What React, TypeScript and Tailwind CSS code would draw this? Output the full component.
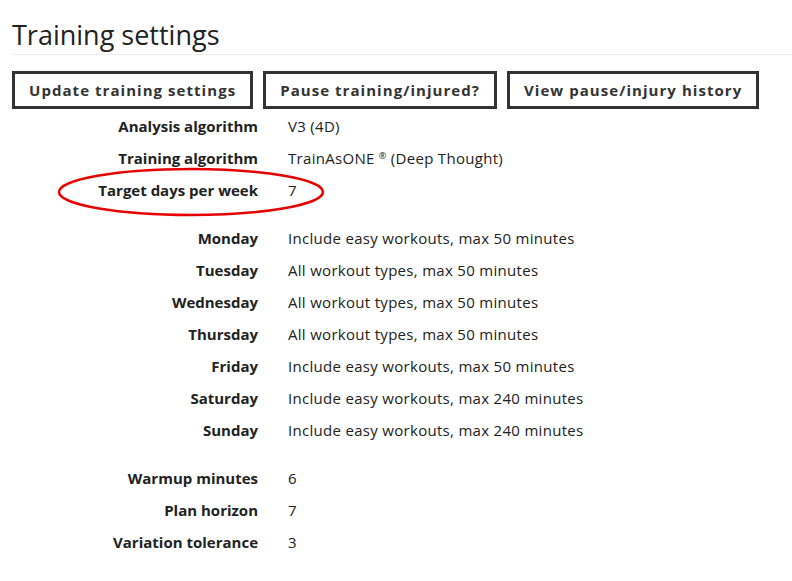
const groups: [string, string][][] = [
  [
    ["Analysis algorithm", "V3 (4D)"],
    ["Training algorithm", "TrainAsONE ® (Deep Thought)"],
    ["Target days per week", "7"],
  ],
  [
    ["Monday", "Include easy workouts, max 50 minutes"],
    ["Tuesday", "All workout types, max 50 minutes"],
    ["Wednesday", "All workout types, max 50 minutes"],
    ["Thursday", "All workout types, max 50 minutes"],
    ["Friday", "Include easy workouts, max 50 minutes"],
    ["Saturday", "Include easy workouts, max 240 minutes"],
    ["Sunday", "Include easy workouts, max 240 minutes"],
  ],
  [
    ["Warmup minutes", "6"],
    ["Plan horizon", "7"],
    ["Variation tolerance", "3"],
  ],
];

function Row({ label, value, circled }: { label: string; value: string; circled?: boolean }) {
  return (
    <div className="relative flex h-8 items-center">
      <div className="w-[258px] shrink-0 text-right font-bold">{label}</div>
      <div className="pl-[30px] tracking-[0.3px]">
        {value.includes("®") ? (
          <>
            TrainAsONE <sup className="text-[9px]">®</sup> (Deep Thought)
          </>
        ) : (
          value
        )}
      </div>
      {circled && (
        <svg
          className="pointer-events-none absolute left-[56px] top-[-8px]"
          width="270"
          height="52"
          viewBox="0 0 270 52"
        >
          <ellipse cx="135" cy="26" rx="132" ry="23" fill="none" stroke="#e60000" strokeWidth="2.5" />
        </svg>
      )}
    </div>
  );
}

export default function App() {
  return (
    <div className="min-h-[581px] bg-white pl-3 pt-[18px] text-[15px] text-[#222] font-['Open_Sans',sans-serif]">
      <h1 className="border-b border-[#eee] pb-[3px] text-[27px] leading-[33px] text-[#222]">
        Training settings
      </h1>
      <div className="mt-4 flex gap-[10px]">
        {["Update training settings", "Pause training/injured?", "View pause/injury history"].map((b) => (
          <button
            key={b}
            className="h-[38px] border-[3px] border-[#333] px-[14px] text-[15px] font-bold tracking-[1.05px] text-[#333]"
          >
            {b}
          </button>
        ))}
      </div>
      <div className="-ml-3 mt-px">
        {groups.map((g, i) => (
          <div key={i} className={i > 0 ? "mt-4" : ""}>
            {g.map(([l, v]) => (
              <Row key={l} label={l} value={v} circled={l === "Target days per week"} />
            ))}
          </div>
        ))}
      </div>
    </div>
  );
}
